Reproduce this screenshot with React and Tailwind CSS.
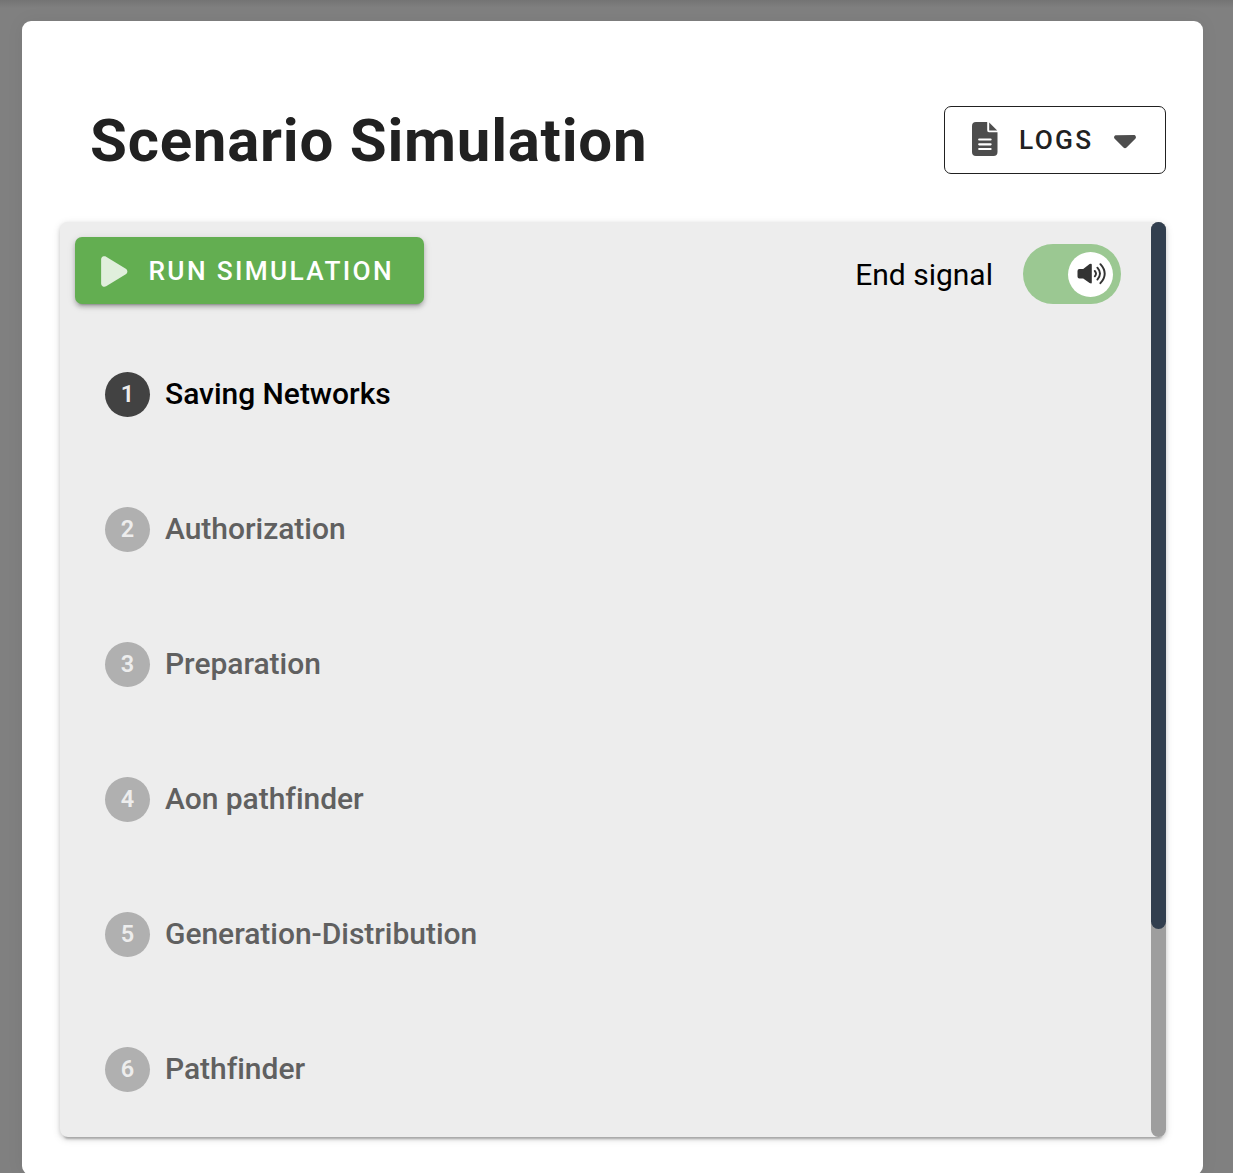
import React from "react";
import { FaCaretDown, FaPlay } from "react-icons/fa6";

const steps = [
  "Saving Networks",
  "Authorization",
  "Preparation",
  "Aon pathfinder",
  "Generation-Distribution",
  "Pathfinder",
];

function FileIcon() {
  return (
    <svg viewBox="0 0 26 34" className="mb-[2px] h-[34px] w-[26px]" fill="#4d4d4d">
      <path d="M4 0H15.2V8.3Q15.2 10.2 17 10.2H25.5V30Q25.5 34 21.5 34H4Q0 34 0 30V4Q0 0 4 0Z" />
      <path d="M17.2 .4L25.2 8.4H17.2Z" />
      <path
        d="M7.2 17.5H18.6M7.2 22.3H18.6M7.2 27H18.6"
        stroke="#fff"
        strokeWidth="2.2"
        strokeLinecap="round"
      />
    </svg>
  );
}

function SpeakerIcon() {
  return (
    <svg viewBox="0 0 30 22" className="ml-[2px] h-[22px] w-[30px]" fill="none">
      <path
        d="M2.4 6H6.2L12.6 1Q14.8 0 14.8 1.8V19.4Q14.8 21.2 12.6 20L6.2 15.6H2.4Q.5 15.6 .5 13.6V8Q.5 6 2.4 6Z"
        fill="#333"
      />
      <path
        d="M17.8 8Q20.2 10.6 17.8 13.3M20.4 4.7Q25.6 10.6 20.4 16.6M23.4 1.2Q32 10.6 23.4 20.2"
        stroke="#333"
        strokeWidth="1.9"
        strokeLinecap="round"
      />
    </svg>
  );
}

function Step({ number, label, active }) {
  return (
    <li className="flex h-[45px] items-center gap-[15px]">
      <span
        className={
          "flex size-[45px] items-center justify-center rounded-full pt-px text-[23.5px] leading-none font-semibold text-[#ededed] " +
          (active ? "bg-[#424242]" : "bg-[#b0b0b0]")
        }
      >
        {number}
      </span>
      <span
        className={
          "pb-[2px] text-[30px] leading-[43px] font-medium tracking-[-0.03px] " +
          (active ? "text-black" : "text-[#606060]")
        }
      >
        {label}
      </span>
    </li>
  );
}

export default function App() {
  return (
    <div className="h-[1173px] overflow-hidden bg-[#808080] bg-[linear-gradient(#747474,#808080_8px)] pt-[21px] pr-[30px] pl-[22px] font-['Roboto',sans-serif]">
      <main className="h-[1154px] rounded-[9px] bg-white pt-[85px] pr-[37px] pl-[38px] shadow-[0_0_18px_rgba(0,0,0,0.06)]">
        <header className="flex h-[68px] items-center justify-between pl-[30px]">
          <h1 className="pt-[2px] text-[60px] leading-[68px] font-bold tracking-[0.75px] text-[#212121]">
            Scenario Simulation
          </h1>
          <button className="flex h-[68px] w-[222px] items-center rounded-[7px] border border-[#212121] pl-[27px] text-[26.25px] font-medium tracking-[2.34px] text-[#212121]">
            <FileIcon />
            <span className="ml-[21px] pt-[2px]">LOGS</span>
            <FaCaretDown className="mb-[2px] ml-[19px] h-[35px] w-[24px] text-[#4d4d4d]" />
          </button>
        </header>

        <section className="mt-[48px] flex h-[915px] rounded-[8px] bg-[#ededed] shadow-[0_6px_2px_-4px_rgba(0,0,0,0.2),0_2px_4px_rgba(0,0,0,0.14),0_2px_9px_rgba(0,0,0,0.12)]">
          <div className="flex-1 pt-[15px] pr-[30px] pl-[15px]">
            <div className="flex justify-between">
              <button className="flex h-[67px] w-[349px] items-center rounded-[7px] bg-[#63ae51] pl-[26px] text-[26.25px] font-medium tracking-[2.34px] text-white shadow-[0_5px_2px_-4px_rgba(0,0,0,0.2),0_3px_4px_rgba(0,0,0,0.2),0_2px_9px_rgba(0,0,0,0.12)]">
                <FaPlay className="mt-px h-[35px] w-[26.5px] text-[#e0efdc]" />
                <span className="ml-[21px] pt-[2px]">RUN SIMULATION</span>
              </button>
              <label className="mt-[7px] flex h-[60px] items-center gap-[30px] text-[30px] text-black">
                <span>End signal</span>
                <span className="flex h-[60px] w-[98px] items-center justify-end rounded-full bg-[#9bc892] pr-[8px]">
                  <span className="flex size-[45px] items-center justify-center rounded-full bg-white">
                    <SpeakerIcon />
                  </span>
                </span>
              </label>
            </div>
            <ol className="mt-[68px] flex flex-col gap-[90px] pl-[30px]">
              {steps.map((label, i) => (
                <Step key={label} number={i + 1} label={label} active={i === 0} />
              ))}
            </ol>
          </div>
          <div className="w-[15px] rounded-[7.5px] bg-[#9e9e9e]">
            <div className="h-[707px] rounded-[7.5px] bg-[#323f4f]" />
          </div>
        </section>
      </main>
    </div>
  );
}
